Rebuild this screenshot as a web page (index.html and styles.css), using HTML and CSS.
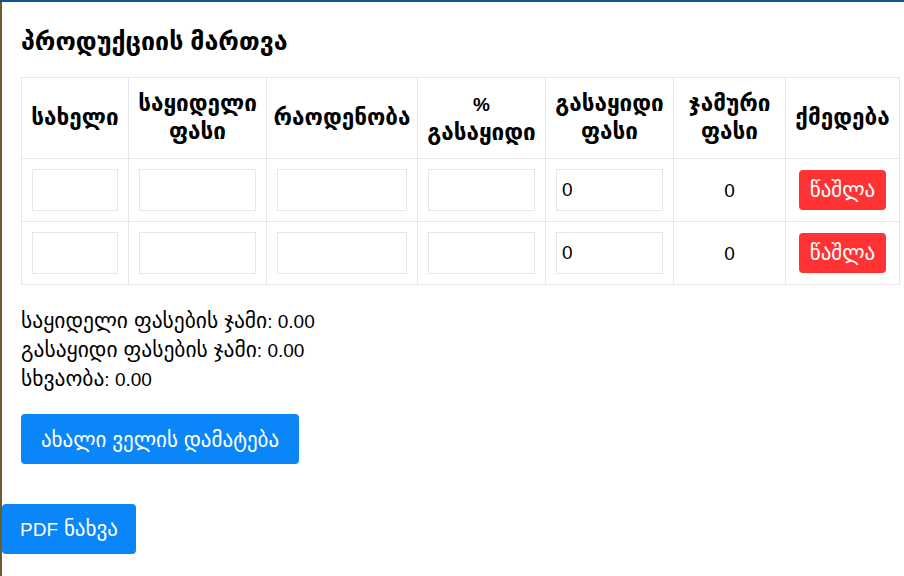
FILE: index.html
```html
<!DOCTYPE html>
<html lang="ka">
<head>
<meta charset="utf-8">
<title>პროდუქციის მართვა</title>
<link rel="stylesheet" href="styles.css">
</head>
<body>
<div class="page">
  <div class="container">
    <h2 class="title">პროდუქციის მართვა</h2>
    <table class="grid">
      <colgroup>
        <col class="c1"><col class="c2"><col class="c3"><col class="c4"><col class="c5"><col class="c6"><col class="c7">
      </colgroup>
      <thead>
        <tr>
          <th>სახელი</th>
          <th>საყიდელი ფასი</th>
          <th>რაოდენობა</th>
          <th><span class="lat">%</span> გასაყიდი</th>
          <th>გასაყიდი ფასი</th>
          <th>ჯამური ფასი</th>
          <th>ქმედება</th>
        </tr>
      </thead>
      <tbody>
        <tr>
          <td><input class="field" type="text"></td>
          <td><input class="field" type="text"></td>
          <td><input class="field" type="text"></td>
          <td><input class="field" type="text"></td>
          <td><input class="field" type="text" value="0"></td>
          <td class="total"><span class="lat">0</span></td>
          <td class="act"><button class="btn-del">წაშლა</button></td>
        </tr>
        <tr>
          <td><input class="field" type="text"></td>
          <td><input class="field" type="text"></td>
          <td><input class="field" type="text"></td>
          <td><input class="field" type="text"></td>
          <td><input class="field" type="text" value="0"></td>
          <td class="total"><span class="lat">0</span></td>
          <td class="act"><button class="btn-del">წაშლა</button></td>
        </tr>
      </tbody>
    </table>
    <div class="summary">
      <p>საყიდელი ფასების ჯამი<span class="lat">: 0.00</span></p>
      <p>გასაყიდი ფასების ჯამი<span class="lat">: 0.00</span></p>
      <p>სხვაობა<span class="lat">: 0.00</span></p>
    </div>
    <button class="btn-blue btn-add">ახალი ველის დამატება</button>
  </div>
  <button class="btn-blue btn-pdf"><span class="lat">PDF</span> ნახვა</button>
</div>
</body>
</html>
```
FILE: styles.css
```css
html, body {
  margin: 0;
  padding: 0;
  background: #fff;
}
body {
  border-top: 2px solid #0b5596;
  font-family: "Liberation Sans", "DejaVu Sans", sans-serif;
  color: #000;
  font-size: 21.5px;
}
.lat {
  font-size: 19px;
}
.page {
  border-left: 2px solid #6b5c30;
  min-height: 574px;
  box-sizing: border-box;
  padding-bottom: 20px;
}
.container {
  padding: 19px 0 0 19px;
}
.title {
  margin: 0 0 16px 0;
  font-size: 25px;
  font-weight: bold;
  line-height: 40px;
  height: 40px;
}
.grid {
  border-collapse: collapse;
  width: 878px;
  table-layout: fixed;
}
.c1 { width: 107px; }
.c2 { width: 138px; }
.c3 { width: 151px; }
.c4 { width: 128px; }
.c5 { width: 128px; }
.c6 { width: 112px; }
.c7 { width: 114px; }
.grid th, .grid td {
  border: 1px solid #e3e6ea;
  text-align: center;
  vertical-align: middle;
}
.grid th {
  font-weight: bold;
  font-size: 22.5px;
  line-height: 28px;
  padding: 11px 2px;
  height: 58px;
}
.grid td {
  padding: 10px;
  height: 42px;
  line-height: 28px;
}
.field {
  display: block;
  width: 100%;
  height: 42px;
  box-sizing: border-box;
  border: 1px solid #e3e6ea;
  border-radius: 0;
  padding: 0 5px;
  font-family: "Liberation Sans", "DejaVu Sans", sans-serif;
  font-size: 19px;
  color: #000;
  outline: none;
  background: #fff;
}
.btn-del {
  background: #ff3333;
  color: #fff;
  border: 0;
  border-radius: 4px;
  height: 40px;
  width: 87px;
  font-family: "Liberation Sans", "DejaVu Sans", sans-serif;
  font-size: 21px;
  padding: 0;
  cursor: pointer;
}
.summary {
  margin: 22px 0 20px 0;
}
.summary p {
  margin: 0;
  line-height: 29px;
  height: 29px;
}
.btn-blue {
  display: block;
  background: #0a86f8;
  color: #fff;
  border: 0;
  border-radius: 4px;
  height: 50px;
  font-family: "Liberation Sans", "DejaVu Sans", sans-serif;
  font-size: 21px;
  line-height: 29px;
  cursor: pointer;
}
.btn-add {
  width: 278px;
  padding: 0;
}
.btn-pdf {
  margin-top: 40px;
  width: 134px;
  padding: 0;
}
```
